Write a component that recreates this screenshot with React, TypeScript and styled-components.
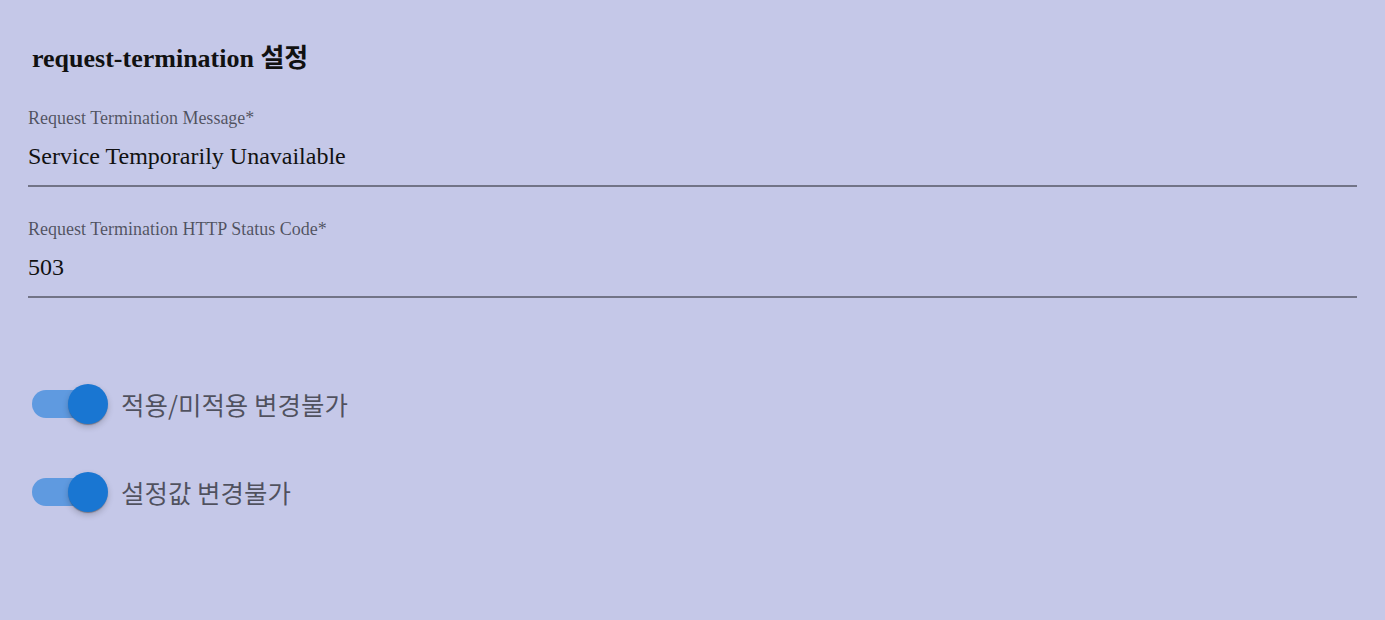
import styled, { createGlobalStyle } from "styled-components"

const GlobalStyle = createGlobalStyle`
  html, body {
    margin: 0;
    padding: 0;
    background-color: #c5c8e8;
  }
`

const Page = styled.div`
  display: flex;
  flex-direction: column;
  padding: 40px 28px 0 28px;
  min-height: 620px;
  box-sizing: border-box;
  background-color: #c5c8e8;
  font-family: "Liberation Serif", "Noto Sans CJK KR", serif;
`

const Title = styled.h2`
  margin: 0 0 0 4px;
  font-size: 26px;
  font-weight: bold;
  color: #111;
  line-height: 38px;
`

const Field = styled.div<{ $top: number }>`
  display: flex;
  flex-direction: column;
  margin-top: ${props => props.$top}px;
  border-bottom: 2px solid rgba(0, 0, 0, 0.42);
`

const FieldLabel = styled.label`
  font-size: 18px;
  line-height: 22px;
  color: rgba(0, 0, 0, 0.6);
`

const FieldValue = styled.div`
  font-size: 24px;
  line-height: 30px;
  color: #111;
  padding: 12px 0 14px 0;
`

const Toggles = styled.div`
  display: flex;
  flex-direction: column;
  gap: 48px;
  margin-top: 86px;
  padding-left: 4px;
`

const ToggleRow = styled.div`
  display: flex;
  align-items: center;
  gap: 13px;
`

const Switch = styled.span`
  position: relative;
  display: inline-block;
  width: 76px;
  height: 40px;
`

const Track = styled.span`
  position: absolute;
  left: 0;
  top: 6px;
  width: 64px;
  height: 28px;
  border-radius: 14px;
  background-color: #5f9ae0;
`

const Thumb = styled.span`
  position: absolute;
  left: 36px;
  top: 0;
  width: 40px;
  height: 40px;
  border-radius: 50%;
  background-color: #1976d2;
  box-shadow: 0 2px 1px -1px rgba(0,0,0,0.2), 0 1px 1px 0 rgba(0,0,0,0.14), 0 3px 6px 0 rgba(0,0,0,0.2);
`

const ToggleLabel = styled.span`
  font-family: "Noto Sans CJK KR", "Noto Sans", sans-serif;
  font-size: 25.5px;
  line-height: 36px;
  color: rgba(0, 0, 0, 0.6);
`

function Toggle({ label }: { label: string }) {
  return (
    <ToggleRow>
      <Switch>
        <Track />
        <Thumb />
      </Switch>
      <ToggleLabel>{label}</ToggleLabel>
    </ToggleRow>
  )
}

export default function App() {
  return (
    <>
      <GlobalStyle />
      <Page>
        <Title>request-termination 설정</Title>
        <Field $top={29}>
          <FieldLabel>Request Termination Message*</FieldLabel>
          <FieldValue>Service Temporarily Unavailable</FieldValue>
        </Field>
        <Field $top={31}>
          <FieldLabel>Request Termination HTTP Status Code*</FieldLabel>
          <FieldValue>503</FieldValue>
        </Field>
        <Toggles>
          <Toggle label="적용/미적용 변경불가" />
          <Toggle label="설정값 변경불가" />
        </Toggles>
      </Page>
    </>
  )
}
